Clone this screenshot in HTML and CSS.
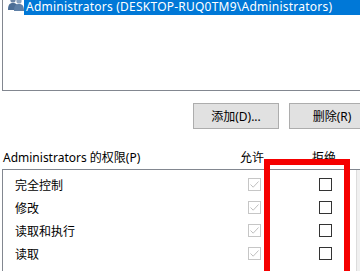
FILE: index.html
```html
<!DOCTYPE html>
<html lang="zh-CN">
<head>
    <meta charset="UTF-8">
    <title>安全</title>
    <link rel="stylesheet" href="styles.css">
</head>
<body>
    <div class="dialog">
        <!-- Group / user names -->
        <div class="users">
            <div class="user-row selected">
                <svg class="user-icon" width="16" height="14" viewBox="0 0 16 14">
                    <circle cx="5" cy="2" r="2.6" fill="#6b86a8"/>
                    <path d="M0 12 C0 6 2 5 5 5 C8 5 10 6 10 12 Z" fill="#4c6e96"/>
                    <circle cx="11" cy="3" r="2.6" fill="#8aa3c0"/>
                    <path d="M6 13 C6 7 8 6 11 6 C14 6 16 7 16 13 Z" fill="#5d7fa6"/>
                </svg>
                <span class="user-name">Administrators (DESKTOP-RUQ0TM9\Administrators)</span>
            </div>
        </div>

        <div class="actions">
            <button class="btn">添加(D)...</button>
            <button class="btn">删除(R)</button>
        </div>

        <!-- Permissions -->
        <div class="perm-head">
            <span class="perm-title">Administrators 的权限(P)</span>
            <span class="col allow">允许</span>
            <span class="col deny">拒绝</span>
        </div>

        <div class="perms">
            <div class="perm-list">
                <div class="perm-row">
                    <span class="perm-name">完全控制</span>
                    <span class="check allow-check checked"></span>
                    <span class="check deny-check"></span>
                </div>
                <div class="perm-row">
                    <span class="perm-name">修改</span>
                    <span class="check allow-check checked"></span>
                    <span class="check deny-check"></span>
                </div>
                <div class="perm-row">
                    <span class="perm-name">读取和执行</span>
                    <span class="check allow-check checked"></span>
                    <span class="check deny-check"></span>
                </div>
                <div class="perm-row">
                    <span class="perm-name">读取</span>
                    <span class="check allow-check checked"></span>
                    <span class="check deny-check"></span>
                </div>
            </div>
            <div class="scrollbar"></div>
        </div>

        <!-- annotation -->
        <div class="highlight-box"></div>
    </div>
</body>
</html>
```

FILE: styles.css
```css
* {
    margin: 0;
    padding: 0;
    box-sizing: border-box;
}

body {
    background: #ffffff;
    overflow: hidden;
    font-family: "Noto Sans", "Noto Sans CJK SC", sans-serif;
    font-size: 12px;
    color: #000;
}

.dialog {
    position: relative;
    width: 400px;
    height: 271px;
}

.users {
    margin-left: 2px;
    height: 91px;
    border-left: 1px solid #828790;
    border-bottom: 1px solid #828790;
}

.user-row {
    display: flex;
    align-items: center;
    height: 15px;
    padding-left: 5px;
}

.user-icon {
    flex-shrink: 0;
    margin-top: -6px;
}

.user-name {
    background: #0078d7;
    color: #fff;
    flex: 1;
    height: 15px;
    line-height: 13px;
    padding-left: 2px;
    letter-spacing: 0.23px;
    white-space: nowrap;
}

.actions {
    display: flex;
    gap: 10px;
    padding: 12px 0 0 193px;
}

.btn {
    width: 86px;
    height: 26px;
    background: #e1e1e1;
    border: 1px solid #adadad;
    font-family: inherit;
    font-size: 12px;
    color: #000;
}

.perm-head {
    display: flex;
    align-items: center;
    height: 20px;
    margin-top: 18px;
    padding-left: 3px;
}

.perm-title {
    width: 237px;
}

.col {
    width: 72px;
}

.perms {
    display: flex;
    margin-left: 2px;
    margin-top: 2px;
    border-top: 1px solid #828790;
    border-left: 1px solid #828790;
    height: 110px;
}

.perm-list {
    width: 353px;
    padding-top: 3px;
}

.perm-row {
    display: flex;
    align-items: center;
    height: 23px;
    padding-left: 12px;
}

.perm-name {
    width: 233px;
}

.check {
    width: 13px;
    height: 13px;
    border: 1px solid #333;
    background: #fff;
}

.allow-check {
    border-color: #c6c6c6;
    margin-right: 58px;
}

.allow-check.checked {
    background: #fff url("data:image/svg+xml,%3Csvg xmlns='http://www.w3.org/2000/svg' width='11' height='11'%3E%3Cpath d='M1.5 5.5 L4.2 8.2 L9.5 2.5' fill='none' stroke='%23c0c0c0' stroke-width='1'/%3E%3C/svg%3E") no-repeat center;
}

.scrollbar {
    flex: 1;
    background: #f0f0f0;
    border-left: 1px solid #dcdcdc;
}

.highlight-box {
    position: absolute;
    left: 264px;
    top: 159px;
    width: 86px;
    height: 120px;
    border: 6px solid #f50000;
}
```
